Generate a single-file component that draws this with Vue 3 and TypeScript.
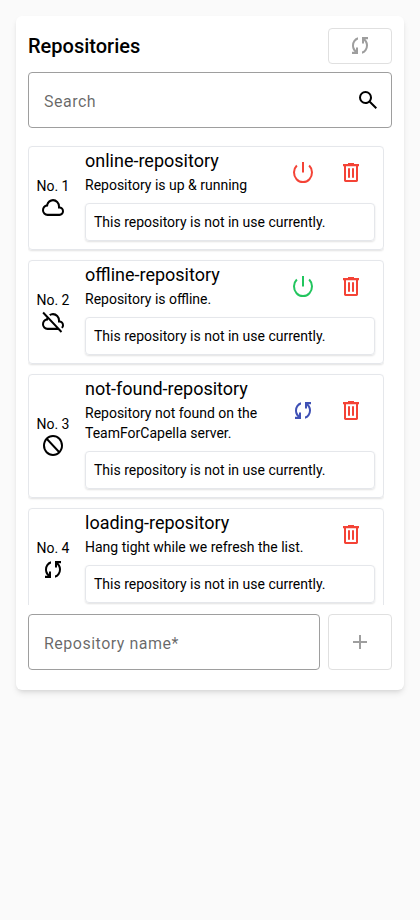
<script setup lang="ts">
type IconName = 'sync' | 'search' | 'cloud' | 'cloudOff' | 'block' | 'power' | 'trash' | 'add'

interface Repository {
  name: string
  description: string
  status: IconName
  action?: { icon: IconName; tone: 'danger' | 'success' | 'primary' }
}

// The tall box draws the glyphs one pixel higher than wide.
const tall = '0 -916 960 910'

const icons: Record<IconName, string> = {
  sync: 'M160-160v-80h110l-16-14q-52-46-73-105t-21-119q0-111 66.5-197.5T400-790v84q-72 26-116 88.5T240-478q0 45 17 87.5t53 78.5l10 10v-98h80v240H160Zm400-10v-84q72-26 116-88.5T720-482q0-45-17-87.5T650-648l-10-10v98h-80v-240h240v80H690l16 14q49 49 71.5 106.5T800-482q0 111-66.5 197.5T560-170Z',
  search: 'M784-120 532-372q-30 24-69 38t-83 14q-109 0-184.5-75.5T120-580q0-109 75.5-184.5T380-840q109 0 184.5 75.5T640-580q0 44-14 83t-38 69l252 252-56 56ZM380-400q75 0 127.5-52.5T560-580q0-75-52.5-127.5T380-760q-75 0-127.5 52.5T200-580q0 75 52.5 127.5T380-400Z',
  cloud: 'M260-160q-91 0-155.5-63T40-377q0-78 47-139t123-78q25-92 100-149t170-57q117 0 198.5 81.5T760-520q69 8 114.5 59.5T920-340q0 75-52.5 127.5T740-160H260Zm0-80h480q42 0 71-29t29-71q0-42-29-71t-71-29h-60v-80q0-83-58.5-141.5T480-720q-83 0-141.5 58.5T280-520h-20q-58 0-99 41t-41 99q0 58 41 99t99 41Z',
  cloudOff: 'M792-56 686-160H260q-92 0-156-64T40-380q0-77 47.5-137T210-594q3-8 6-15.5t6-16.5L56-792l56-56 736 736-56 56ZM260-240h346L284-562q-2 11-3 21t-1 21h-20q-58 0-99 41t-41 99q0 58 41 99t99 41Zm604 30-58-56q17-14 25.5-32.5T840-340q0-42-29-71t-71-29h-60v-80q0-83-58.5-141.5T480-720q-27 0-52 6.5T380-693l-58-58q35-24 74.5-36.5T480-800q117 0 198.5 81.5T760-520q69 8 114.5 59.5T920-340q0 39-15 72.5T864-210Z',
  block: 'M480-80q-83 0-156-31.5T197-197q-54-54-85.5-127T80-480q0-83 31.5-156T197-763q54-54 127-85.5T480-880q83 0 156 31.5T763-763q54 54 85.5 127T880-480q0 83-31.5 156T763-197q-54 54-127 85.5T480-80Zm0-80q54 0 104-17.5t92-50.5L228-676q-33 42-50.5 92T160-480q0 134 93 227t227 93Zm252-124q33-42 50.5-92T800-480q0-134-93-227t-227-93q-54 0-104 17.5T284-732l448 448Z',
  power: 'M440-480v-400h80v400h-80ZM206-771A400 400 0 1 0 754-771L697-713A320 320 0 1 1 263-713Z',
  trash: 'M260-120q-25 0-42.500-17.500T200-180v-540h-40v-80h200v-40h240v40h200v80h-40v540q0 25-17.500 42.500T700-120H260Zm420-600H280v520h400v-520ZM360-280h80v-360h-80v360Zm160 0h80v-360h-80v360Z',
  add: 'M440-440H200v-80h240v-240h80v240h240v80H520v240h-80v-240Z',
}

const repositories: Repository[] = [
  { name: 'online-repository', description: 'Repository is up & running', status: 'cloud', action: { icon: 'power', tone: 'danger' } },
  { name: 'offline-repository', description: 'Repository is offline.', status: 'cloudOff', action: { icon: 'power', tone: 'success' } },
  { name: 'not-found-repository', description: 'Repository not found on the TeamForCapella server.', status: 'block', action: { icon: 'sync', tone: 'primary' } },
  { name: 'loading-repository', description: 'Hang tight while we refresh the list.', status: 'sync' },
]
</script>

<template>
  <main class="card">
    <header class="head">
      <h2>Repositories</h2>
      <button class="outlined refresh" disabled aria-label="Refresh">
        <svg class="icon" :viewBox="tall" preserveAspectRatio="none"><path :d="icons.sync" /></svg>
      </button>
    </header>

    <label class="field search">
      <input type="text" placeholder="Search" />
      <svg class="icon" viewBox="0 -960 960 960"><path :d="icons.search" /></svg>
    </label>

    <div class="list">
      <article v-for="(repo, index) in repositories" :key="repo.name" class="repo">
        <div class="status">
          <span>No. {{ index + 1 }}</span>
          <svg class="icon" :viewBox="tall" preserveAspectRatio="none"><path :d="icons[repo.status]" /></svg>
        </div>
        <div class="body">
          <div class="top">
            <div class="text">
              <div class="name">{{ repo.name }}</div>
              <div class="description">{{ repo.description }}</div>
            </div>
            <div class="actions">
              <button v-if="repo.action" :class="['action', repo.action.tone]" aria-label="Toggle">
                <svg class="icon" :viewBox="tall" preserveAspectRatio="none"><path :d="icons[repo.action.icon]" /></svg>
              </button>
              <button class="action danger" aria-label="Delete">
                <svg class="icon" :viewBox="tall" preserveAspectRatio="none"><path :d="icons.trash" /></svg>
              </button>
            </div>
          </div>
          <div class="usage">This repository is not in use currently.</div>
        </div>
      </article>
    </div>

    <form class="create" @submit.prevent>
      <label class="field">
        <input type="text" placeholder="Repository name*" />
      </label>
      <button class="outlined add" disabled aria-label="Add">
        <svg class="icon" viewBox="0 -960 960 960"><path :d="icons.add" /></svg>
      </button>
    </form>
  </main>
</template>

<style>
body {
  background: #fafafa;
}
</style>

<style scoped>
* {
  box-sizing: border-box;
}

.card {
  margin: 16px;
  height: 674px;
  padding: 12px;
  background: #fff;
  border-radius: 6px;
  box-shadow: 0 4px 6px -1px rgba(0, 0, 0, 0.1), 0 2px 4px -2px rgba(0, 0, 0, 0.1);
  font: 14px/20px Roboto, sans-serif;
  color: #000;
}

.icon {
  display: block;
  flex: none;
  width: 24px;
  height: 24px;
  fill: currentColor;
  overflow: visible;
}

.head {
  display: flex;
  align-items: center;
  justify-content: space-between;
  height: 36px;
}

h2 {
  margin: 0;
  font-size: 20px;
  font-weight: 500;
  line-height: 32px;
}

button {
  display: flex;
  align-items: center;
  justify-content: center;
  padding: 0;
  border: 0;
  background: transparent;
}

.outlined {
  flex: none;
  width: 64px;
  border: 1px solid #e0e0e0;
  border-radius: 4px;
  color: #9e9e9e;
}

.refresh {
  height: 36px;
}

.field {
  display: flex;
  align-items: center;
  height: 56px;
  padding: 0 11px 0 15px;
  border: 1px solid #9e9e9e;
  border-radius: 4px;
}

.field input {
  flex: 1;
  min-width: 0;
  padding: 3px 0 0;
  border: 0;
  outline: 0;
  background: none;
  font: 16px/24px Roboto, sans-serif;
  letter-spacing: 0.5px;
}

.field input::placeholder {
  color: rgba(0, 0, 0, 0.6);
  opacity: 1;
}

.search {
  margin-top: 8px;
}

.list {
  height: 460px;
  margin: 17px 8px 0 0;
  overflow: hidden;
}

.repo {
  display: flex;
  gap: 8px;
  margin: 1px 0 10px;
  padding: 0 8px 8px 0;
  border: 1px solid #e5e7eb;
  border-radius: 4px;
  box-shadow: 0 1px 2px rgba(0, 0, 0, 0.12);
}

.status {
  display: flex;
  flex-direction: column;
  align-items: center;
  justify-content: center;
  width: 48px;
  padding-top: 8px;
  flex: none;
}

.body {
  flex: 1;
  min-width: 0;
}

.top {
  display: flex;
  justify-content: space-between;
}

.text {
  min-width: 0;
}

.name {
  font-size: 18px;
  line-height: 28px;
}

.actions {
  display: flex;
  align-items: center;
  flex: none;
  margin: 2px 0 -2px;
}

.action {
  width: 48px;
  height: 48px;
}

.danger {
  color: #f44336;
}

.success {
  color: #22c55e;
}

.primary {
  color: #3f51b5;
}

.usage {
  height: 38px;
  margin-top: 8px;
  padding: 8px;
  border: 1px solid #e5e7eb;
  border-radius: 4px;
  box-shadow: 0 1px 2px rgba(0, 0, 0, 0.12);
}

.create {
  display: flex;
  gap: 8px;
  margin-top: 9px;
}

.create .field {
  flex: 1;
}

.add {
  height: 56px;
}
</style>
